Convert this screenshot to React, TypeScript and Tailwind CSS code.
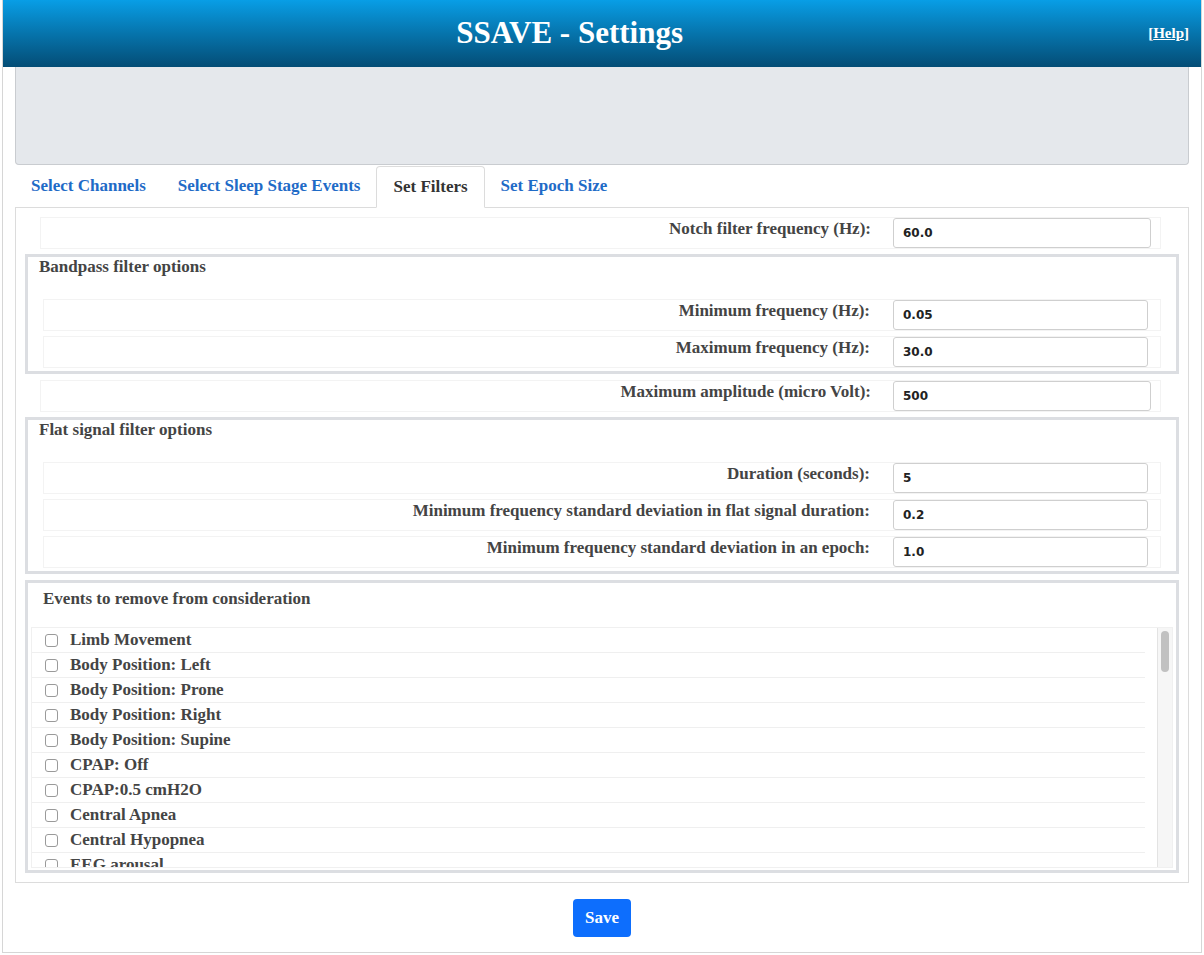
const serif = { fontFamily: '"Liberation Serif", "Times New Roman", serif' };

const events = [
  'Limb Movement',
  'Body Position: Left',
  'Body Position: Prone',
  'Body Position: Right',
  'Body Position: Supine',
  'CPAP: Off',
  'CPAP:0.5 cmH2O',
  'Central Apnea',
  'Central Hypopnea',
  'EEG arousal',
  'Hypopnea',
  'Mixed Apnea',
  'Obstructive Apnea',
  'Obstructive Hypopnea',
  'SpO2 desaturation',
];

function Field({ label, value, inset = false }: { label: string; value: string; inset?: boolean }) {
  return (
    <div className="flex items-center h-[32px] border border-[#f3f3f3]">
      <label className={`flex-1 text-right text-[17px] font-bold text-[#444] pb-[8px] ${inset ? 'pr-[23px]' : 'pr-[22px]'}`}>{label}</label>
      <input
        readOnly
        value={value}
        className={`h-[30px] border border-[#cfcfcf] rounded-[3px] pl-[9px] text-[12px] font-bold text-[#222] outline-none ${inset ? 'w-[255px] mr-[12px]' : 'w-[258px] mr-[9px]'}`}
        style={{ fontFamily: '"DejaVu Sans", Verdana, sans-serif' }}
      />
    </div>
  );
}

function Group({ title, children }: { title: string; children: React.ReactNode }) {
  return (
    <div className="mx-[9px] border-[3px] border-[#dcdee2] px-[15px] pb-[3px]">
      <p className="-ml-[4px] leading-[20px] mb-[22px] text-[17px] font-bold text-[#444]">{title}</p>
      <div className="flex flex-col gap-[5px]">{children}</div>
    </div>
  );
}

export default function App() {
  return (
    <div className="bg-white min-h-[955px]" style={serif}>
      <div className="ml-[2px] w-[1200px] border border-t-0 border-[#d6d6d6] pb-[15px]">
        <div className="flex items-center h-[67px] bg-gradient-to-b from-[#089ee6] to-[#044d76]">
          <h1 className="flex-1 text-center text-[31px] font-bold text-white">SSAVE - Settings</h1>
          <a href="#" className="pl-3 pr-[12px] text-[15px] font-bold text-white">
            [<span className="underline">Help</span>]
          </a>
        </div>

        <div className="px-[12px]">
          <div className="h-[98px] bg-[#e5e8ec] border border-t-0 border-[#c9ccd0] rounded-b-[4px]" />

          <div className="flex mt-[1px] text-[17px] font-bold">
            <a href="#" className="px-[16px] leading-[24px] py-[8px] text-[#1f6bc7]">Select Channels</a>
            <a href="#" className="px-[16px] leading-[24px] py-[8px] text-[#1f6bc7]">Select Sleep Stage Events</a>
            <a href="#" className="px-[16px] leading-[24px] py-[8px] text-[#333] border border-[#dcdcdc] border-b-white rounded-t-[4px] -mb-px bg-white relative">Set Filters</a>
            <a href="#" className="px-[16px] leading-[24px] py-[8px] text-[#1f6bc7]">Set Epoch Size</a>
          </div>

          <div className="border border-[#dcdcdc] pt-[9px] pb-[9px] flex flex-col gap-[5px]">
            <div className="ml-[24px] mr-[27px]">
              <Field label="Notch filter frequency (Hz):" value="60.0" />
            </div>

            <Group title="Bandpass filter options">
              <Field inset label="Minimum frequency (Hz):" value="0.05" />
              <Field inset label="Maximum frequency (Hz):" value="30.0" />
            </Group>

            <div className="ml-[24px] mr-[27px] mt-[1px]">
              <Field label="Maximum amplitude (micro Volt):" value="500" />
            </div>

            <Group title="Flat signal filter options">
              <Field inset label="Duration (seconds):" value="5" />
              <Field inset label="Minimum frequency standard deviation in flat signal duration:" value="0.2" />
              <Field inset label="Minimum frequency standard deviation in an epoch:" value="1.0" />
            </Group>

            <div className="mx-[9px] mt-[1px] border-[3px] border-[#dcdee2] px-[3px] pb-[2px]">
              <p className="px-[12px] leading-[20px] mt-[6px] mb-[18px] text-[17px] font-bold text-[#444]">Events to remove from consideration</p>
              <div className="flex h-[241px] border border-[#f0f0f0] overflow-hidden">
                <ul className="flex-1 mr-[12px] overflow-hidden">
                  {events.map((e) => (
                    <li key={e} className="flex items-center h-[25px] border-b border-[#efefef] pl-[13px]">
                      <span className="w-[13px] h-[13px] border border-[#9a9a9a] rounded-[3px] bg-white shrink-0" />
                      <span className="ml-[12px] text-[17px] font-bold text-[#444] leading-[20px]">{e}</span>
                    </li>
                  ))}
                </ul>
                <div className="w-[15px] bg-[#f6f6f6] border-l border-[#e3e3e3] flex justify-center pt-[3px]">
                  <div className="w-[8px] h-[41px] rounded-[4px] bg-[#c1c1c1]" />
                </div>
              </div>
            </div>
          </div>
        </div>

        <div className="flex justify-center mt-[16px]">
          <button className="h-[38px] px-[12px] bg-[#0d6efd] rounded-[4px] text-white text-[17px] font-bold">Save</button>
        </div>
      </div>
    </div>
  );
}
